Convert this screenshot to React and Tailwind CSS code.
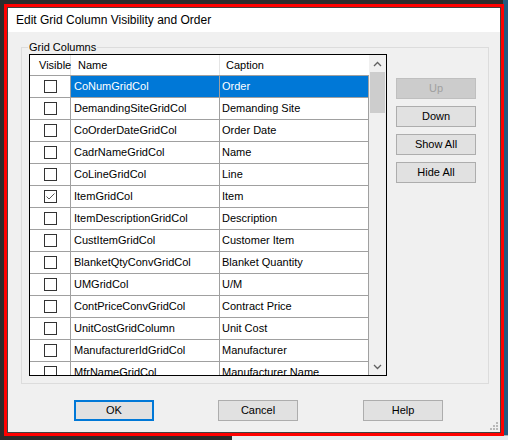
const ROWS = [
  { name: 'CoNumGridCol', caption: 'Order', selected: true },
  { name: 'DemandingSiteGridCol', caption: 'Demanding Site' },
  { name: 'CoOrderDateGridCol', caption: 'Order Date' },
  { name: 'CadrNameGridCol', caption: 'Name' },
  { name: 'CoLineGridCol', caption: 'Line' },
  { name: 'ItemGridCol', caption: 'Item', checked: true },
  { name: 'ItemDescriptionGridCol', caption: 'Description' },
  { name: 'CustItemGridCol', caption: 'Customer Item' },
  { name: 'BlanketQtyConvGridCol', caption: 'Blanket Quantity' },
  { name: 'UMGridCol', caption: 'U/M' },
  { name: 'ContPriceConvGridCol', caption: 'Contract Price' },
  { name: 'UnitCostGridColumn', caption: 'Unit Cost' },
  { name: 'ManufacturerIdGridCol', caption: 'Manufacturer' },
  { name: 'MfrNameGridCol', caption: 'Manufacturer Name' },
]

const FONT = { fontFamily: '"Liberation Sans", Arial, sans-serif' }

function CheckBox({ checked }) {
  return (
    <div className="w-[13px] h-[13px] border border-[#333333] bg-white flex items-center justify-center">
      {checked && (
        <svg width="11" height="11" viewBox="0 0 11 11">
          <polyline points="1.5,5.5 4,8 9.5,2.5" fill="none" stroke="#555" strokeWidth="1" />
        </svg>
      )}
    </div>
  )
}

function SideButton({ label, disabled }) {
  return (
    <div
      className={`w-[80px] h-[21px] flex items-center justify-center text-[11px] border ${
        disabled ? 'bg-[#cccccc] border-[#bfbfbf] text-[#a0a0a0]' : 'bg-[#e1e1e1] border-[#adadad] text-black'
      }`}
    >
      {label}
    </div>
  )
}

function BottomButton({ label, primary }) {
  return (
    <div
      className={`w-[80px] h-[21px] flex items-center justify-center text-[11px] bg-[#e1e1e1] text-black ${
        primary ? 'border-2 border-[#0078d7]' : 'border border-[#adadad]'
      }`}
    >
      {label}
    </div>
  )
}

function Grid() {
  return (
    <div className="w-[358px] h-[322px] border border-black bg-white flex overflow-hidden">
      <div className="w-[339px] flex flex-col">
        <div className="h-[21px] flex shrink-0 border-b border-[#a0a0a0] text-[11px] text-black">
          <div className="w-[41px] border-r border-[#e5e5e5] flex items-center pl-[9px]">Visible</div>
          <div className="w-[149px] border-r border-[#e5e5e5] flex items-center pl-[7px]">Name</div>
          <div className="w-[149px] flex items-center pl-[6px]">Caption</div>
        </div>
        {ROWS.map(r => (
          <div key={r.name} className="h-[22px] flex shrink-0 border-b border-[#a0a0a0] text-[11px]">
            <div className="w-[41px] border-r border-[#a0a0a0] flex items-center justify-center bg-white">
              <CheckBox checked={r.checked} />
            </div>
            <div
              className={`w-[149px] border-r border-[#a0a0a0] flex items-center pl-[3px] whitespace-nowrap overflow-hidden ${
                r.selected ? 'bg-[#0078d7] text-white' : 'text-black'
              }`}
            >
              {r.name}
            </div>
            <div
              className={`w-[149px] border-r border-[#a0a0a0] flex items-center pl-[2px] whitespace-nowrap overflow-hidden ${
                r.selected ? 'bg-[#0078d7] text-white' : 'text-black'
              }`}
            >
              {r.caption}
            </div>
          </div>
        ))}
      </div>
      <div className="w-[17px] bg-[#f0f0f0] flex flex-col">
        <div className="h-[17px] flex items-center justify-center shrink-0">
          <svg width="9" height="6" viewBox="0 0 9 6">
            <polyline points="1,5 4.5,1.5 8,5" fill="none" stroke="#606060" strokeWidth="1.3" />
          </svg>
        </div>
        <div className="h-[41px] mx-[1px] bg-[#cdcdcd] shrink-0" />
        <div className="flex-1" />
        <div className="h-[17px] flex items-center justify-center shrink-0">
          <svg width="9" height="6" viewBox="0 0 9 6">
            <polyline points="1,1 4.5,4.5 8,1" fill="none" stroke="#606060" strokeWidth="1.3" />
          </svg>
        </div>
      </div>
    </div>
  )
}

export default function App() {
  return (
    <div className="w-[508px] h-[440px] bg-[#2b2b2b] relative overflow-hidden" style={FONT}>
      <div className="absolute right-0 top-0 w-[5px] h-[440px] bg-[#215a7f]" />
      <div className="absolute left-[232px] bottom-0 w-[276px] h-[5px] bg-[#e6ebef] border-t border-[#b0b0b0]" />
      <div className="absolute left-[4px] top-[4px] w-[500px] h-[432px] border-[3px] border-[#ff0000] bg-[#2b2b2b]">
        <div className="w-full h-full flex flex-col border border-[#404040]">
          <div className="h-[24px] bg-white flex items-center pl-[8px] text-[12px] text-black shrink-0">
            Edit Grid Column Visibility and Order
          </div>
          <div className="flex-1 bg-[#f0f0f0] flex flex-col relative">
            <div className="ml-[13px] mt-[15px] w-[468px] h-[337px] border border-[#dcdcdc] relative">
              <div className="absolute left-[6px] top-[-8px] px-[1px] bg-[#f0f0f0] text-[11px] text-black leading-[14px]">
                Grid Columns
              </div>
              <div className="flex pl-[7px] pt-[6px] gap-[9px]">
                <Grid />
                <div className="flex flex-col gap-[7px] pt-[24px]">
                  <SideButton label="Up" disabled />
                  <SideButton label="Down" />
                  <SideButton label="Show All" />
                  <SideButton label="Hide All" />
                </div>
              </div>
            </div>
            <div className="flex ml-[66px] mt-[16px] gap-[64px]">
              <BottomButton label="OK" primary />
              <BottomButton label="Cancel" />
              <div className="ml-[1px]">
                <BottomButton label="Help" />
              </div>
            </div>
            <svg className="absolute right-[2px] bottom-[2px]" width="9" height="9" viewBox="0 0 9 9">
              <rect x="7" y="1" width="2" height="2" fill="#b8b8b8" />
              <rect x="4" y="4" width="2" height="2" fill="#b8b8b8" />
              <rect x="7" y="4" width="2" height="2" fill="#b8b8b8" />
              <rect x="1" y="7" width="2" height="2" fill="#b8b8b8" />
              <rect x="4" y="7" width="2" height="2" fill="#b8b8b8" />
              <rect x="7" y="7" width="2" height="2" fill="#b8b8b8" />
            </svg>
          </div>
        </div>
      </div>
    </div>
  )
}
